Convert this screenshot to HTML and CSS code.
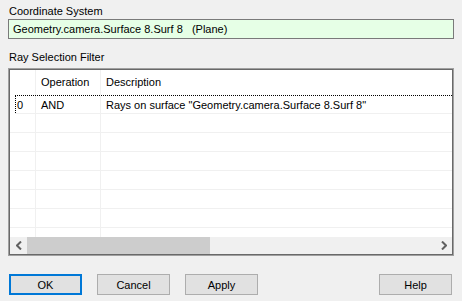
FILE: index.html
```html
<!DOCTYPE html>
<html lang="en">
<head>
  <meta charset="UTF-8" />
  <title>Ray Filter</title>
  <link rel="stylesheet" href="styles.css">
</head>
<body>
  <div class="dialog">
    <div class="label">Coordinate System</div>
    <div class="coord">Geometry.camera.Surface 8.Surf 8&nbsp;&nbsp; (Plane)</div>

    <div class="label label-filter">Ray Selection Filter</div>
    <div class="frame">
      <div class="grid">
        <div class="row head">
          <div class="cell c0"></div>
          <div class="cell c1">Operation</div>
          <div class="cell c2">Description</div>
        </div>
        <div class="row focus">
          <div class="cell c0">0</div>
          <div class="cell c1">AND</div>
          <div class="cell c2">Rays on surface "Geometry.camera.Surface 8.Surf 8"</div>
        </div>
        <div class="row"><div class="cell c0"></div><div class="cell c1"></div><div class="cell c2"></div></div>
        <div class="row"><div class="cell c0"></div><div class="cell c1"></div><div class="cell c2"></div></div>
        <div class="row"><div class="cell c0"></div><div class="cell c1"></div><div class="cell c2"></div></div>
        <div class="row"><div class="cell c0"></div><div class="cell c1"></div><div class="cell c2"></div></div>
        <div class="row"><div class="cell c0"></div><div class="cell c1"></div><div class="cell c2"></div></div>
        <div class="row"><div class="cell c0"></div><div class="cell c1"></div><div class="cell c2"></div></div>
        <div class="row"><div class="cell c0"></div><div class="cell c1"></div><div class="cell c2"></div></div>
      </div>
      <div class="hscroll">
        <div class="arrow">
          <svg width="6" height="9" viewBox="0 0 6 9"><path d="M5 0.5 L1 4.5 L5 8.5" fill="none" stroke="#606060" stroke-width="2"/></svg>
        </div>
        <div class="track"><div class="thumb"></div></div>
        <div class="arrow">
          <svg width="6" height="9" viewBox="0 0 6 9"><path d="M1 0.5 L5 4.5 L1 8.5" fill="none" stroke="#606060" stroke-width="2"/></svg>
        </div>
      </div>
    </div>

    <div class="buttons">
      <button class="btn default">OK</button>
      <button class="btn">Cancel</button>
      <button class="btn">Apply</button>
      <button class="btn help">Help</button>
    </div>
  </div>
</body>
</html>
```

FILE: styles.css
```css
* { box-sizing: border-box; margin: 0; padding: 0; }
html, body { width: 462px; height: 301px; overflow: hidden; }
body {
  background-color: #f0f0f0;
  font-family: "Liberation Sans", Arial, sans-serif;
  font-size: 11px;
  color: #000;
}
.dialog { padding: 4px 8px 0 8px; }
.label { height: 15px; line-height: 15px; padding-left: 1px; }
.label-filter { margin-top: 11px; }
.coord {
  height: 20px;
  line-height: 18px;
  border: 1px solid #7a7a7a;
  background-color: #e6ffe6;
  padding-left: 4px;
  white-space: nowrap;
}
.frame {
  margin-top: 3px;
  height: 188px;
  border: 1px solid #a0a0a0;
  background-color: #fff;
  display: flex;
  flex-direction: column;
  overflow: hidden;
}
.grid {
  flex: 1;
  overflow: hidden;
  border: 1px solid #696969;
  border-bottom: none;
}
.row {
  display: flex;
  height: 19px;
  border-bottom: 1px solid #f0f0f0;
}
.row.head { height: 25px; border-bottom: none; }
.row.head .cell { line-height: 25px; }
.row.focus { height: 19px; border-top: 1px dotted #000; margin-left: 5px; }
.row.focus .c0 { border-left: 1px dotted #000; width: 21px; padding-left: 1px; }
.cell { line-height: 18px; white-space: nowrap; overflow: hidden; }
.c0 { width: 26px; border-right: 1px solid #f0f0f0; padding-left: 7px; }
.c1 { width: 65px; border-right: 1px solid #f0f0f0; padding-left: 5px; }
.c2 { flex: 1; padding-left: 5px; }
.hscroll {
  height: 18px;
  display: flex;
  background-color: #f0f0f0;
  border: 1px solid #696969;
  border-top: none;
}
.arrow {
  width: 17px;
  display: flex;
  align-items: center;
  justify-content: center;
}
.track { flex: 1; display: flex; }
.thumb { width: 183px; background-color: #cdcdcd; }
.buttons {
  display: flex;
  gap: 15px;
  margin-top: 18px;
  padding: 0 2px 0 1px;
}
.btn {
  width: 73px;
  height: 21px;
  background-color: #e1e1e1;
  border: 1px solid #adadad;
  font-family: inherit;
  font-size: 11px;
  color: #000;
}
.btn.default { border: 2px solid #0078d7; }
.btn.help { margin-left: auto; }
```
